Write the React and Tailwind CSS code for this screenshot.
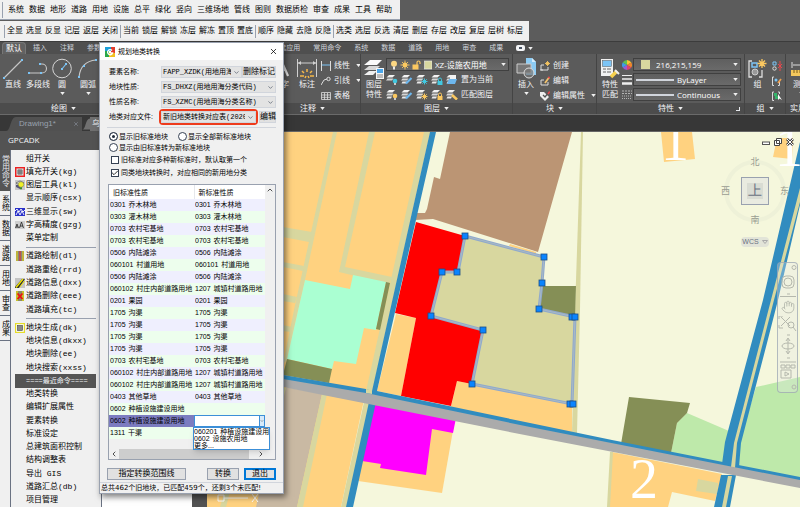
import React, { useState } from 'react';
import { X, ChevronDown, ChevronUp, ChevronLeft, ChevronRight, Check, Hand } from 'lucide-react';

const menus = ['系统', '数据', '地形', '道路', '用地', '设施', '总平', '绿化', '竖向', '三维场地', '管线', '图则', '数据质检', '审查', '成果', '工具', '帮助'];

const layerTools = [
  ['全显', '选显', '反显', '记层', '返层', '关闭'],
  ['当前', '锁层', '解锁', '冻层', '解冻', '置顶', '置底'],
  ['顺序', '隐藏', '去隐', '反隐'],
  ['选类', '选层', '反选', '清层', '删层', '存层', '改层', '复层', '层树', '标层'],
];

const ribbonTabs = ['插入', '注释', '参数化', '视图', '管理', '输出', '附加模块', 'A360', '精选应用', '常用命令', '系统', '数据', '道路', '用地', '审查', '成果'];

const sideTabs = ['系统', '数据', '道路', '用地', '审查', '成果'];

const commands = [
  { name: '组开关' },
  { name: '填充开关(kg)', icon: 'fill' },
  { name: '图层工具(kl)', icon: 'layer' },
  { name: '显示顺序(csx)' },
  { name: '三维显示(sw)', icon: 'mesh' },
  { name: '字高精度(gzg)', icon: 'text' },
  { name: '菜单定制' },
  { divider: true },
  { name: '道路绘制(dl)', icon: 'road' },
  { name: '道路重绘(rrd)' },
  { name: '道路信息(dxx)', icon: 'info' },
  { name: '道路删除(eee)', icon: 'delete' },
  { name: '道路填充(tc)' },
  { divider: true },
  { name: '地块生成(dk)', icon: 'block' },
  { name: '地块信息(dkxx)' },
  { name: '地块删除(ee)' },
  { name: '地块搜索(xxss)' },
  { name: '====最近命令====', heading: true },
  { name: '地类转换' },
  { name: '编辑扩展属性' },
  { name: '要素转换' },
  { name: '标准设定' },
  { name: '总建筑面积控制' },
  { name: '结构调整表' },
  { name: '导出 GIS' },
  { name: '道路汇总(db)' },
  { name: '项目管理' },
];

const rows = [
  ['0301', '乔木林地', '0301', '乔木林地'],
  ['0303', '灌木林地', '0303', '灌木林地'],
  ['0703', '农村宅基地', '0703', '农村宅基地'],
  ['0703', '农村宅基地', '0703', '农村宅基地'],
  ['0506', '内陆滩涂', '0506', '内陆滩涂'],
  ['060101', '村道用地', '060101', '村道用地'],
  ['0506', '内陆滩涂', '0506', '内陆滩涂'],
  ['060102', '村庄内部道路用地', '1207', '城镇村道路用地'],
  ['0201', '果园', '0201', '果园'],
  ['1705', '沟渠', '1705', '沟渠'],
  ['1705', '沟渠', '1705', '沟渠'],
  ['1705', '沟渠', '1705', '沟渠'],
  ['1705', '沟渠', '1705', '沟渠'],
  ['0703', '农村宅基地', '0703', '农村宅基地'],
  ['060102', '村庄内部道路用地', '1207', '城镇村道路用地'],
  ['060102', '村庄内部道路用地', '1207', '城镇村道路用地'],
  ['0403', '其他草地', '0403', '其他草地'],
  ['0602', '种植设施建设用地', '', ''],
  ['0602', '种植设施建设用地', '', ''],
  ['1311', '干渠', '', ''],
];

const SELECTED = 18;

const grips = [
  [465, 236], [544, 257], [542, 283], [539, 309], [572, 317], [575, 317], [570, 404], [573, 404],
  [472, 384], [483, 330], [431, 316], [442, 272], [457, 272],
];

const CommandIcon = ({ type }) => (
  <svg viewBox="0 0 10 10" className="h-[10px] w-[10px] shrink-0" aria-hidden="true">
    {type === 'fill' && (
      <>
        <rect width="10" height="10" fill="#d3d3d3" />
        <rect x=".7" y=".7" width="8.6" height="8.6" fill="none" stroke="#ee2020" strokeWidth="1.4" />
        <path d="M3 3h4v4H3zM3 5h4M5 3v4" fill="none" stroke="#444" strokeWidth=".7" />
      </>
    )}
    {type === 'layer' && (
      <>
        <rect width="10" height="10" fill="#c8c8c8" />
        <path d="M1 3l4-2 4 2-4 2z" fill="#fff" stroke="#333" strokeWidth=".6" />
        <path d="M1 5v2l4 2V5z" fill="#557" />
        <circle cx="6" cy="4.500" r="2.800" fill="#eef02a" stroke="#555" strokeWidth=".4" />
        <path d="M5 7.300h2v2H5z" fill="#3a8c2c" />
      </>
    )}
    {type === 'mesh' && (
      <>
        <rect y="1" width="10" height="8" fill="#2a30c8" />
        <path d="M0 4l2-2 2 3 2-3 2 3 2-2M1 8l2-4 2 4 2-4 2 4" fill="none" stroke="#fff" strokeWidth=".9" />
      </>
    )}
    {type === 'text' && (
      <>
        <rect y="1" width="10" height="8" fill="#cfcfcf" />
        <path d="M.5 8l1.5-4 1.5 4M1 7h2M4.500 8l2-6 2 6M5 6h3" fill="none" stroke="#222" strokeWidth=".8" />
      </>
    )}
    {type === 'road' && (
      <>
        <rect x="1" width="8" height="10" fill="#8a8478" />
        <path d="M2 0v10M8 0v10" stroke="#f2e600" strokeWidth="1" />
        <path d="M5 0v10" stroke="#d33" strokeWidth="1.2" />
      </>
    )}
    {type === 'info' && (
      <>
        <rect width="10" height="10" fill="#c4c4c4" />
        <path d="M0 9l7-8h3L4 10H0z" fill="#333" />
        <path d="M1 9.500L8 1" stroke="#f2e600" strokeWidth="1.300" />
        <path d="M4.500 9.500L9.500 3" stroke="#f2e600" />
      </>
    )}
    {type === 'delete' && (
      <>
        <rect x="1" width="8" height="10" fill="#8c8c66" />
        <path d="M2 0v10M8 0v10" stroke="#f2e600" strokeWidth="1.2" />
        <path d="M2.500 2.500l5 5.500M7.500 2.500l-5 5.500" stroke="#f01010" strokeWidth="1.800" />
      </>
    )}
    {type === 'block' && (
      <>
        <rect x=".6" y=".6" width="8.800" height="8.800" fill="#fff" stroke="#e6dc28" strokeWidth="1.2" />
        <rect x="2.500" y="2.500" width="5" height="5" fill="#8a8a8a" stroke="#444" strokeWidth=".6" />
      </>
    )}
  </svg>
);

const Caret = ({ className = '' }) => (
  <svg viewBox="0 0 6 4" className={`h-[3px] w-[5px] shrink-0 ${className}`} aria-hidden="true">
    <path d="M0 0h6L3 4z" fill="#f0f0f0" />
  </svg>
);

const Panel = ({ title, className, launcher, children }) => (
  <section className={`flex shrink-0 flex-col border-r border-[#444] ${className}`}>
    <div className="flex flex-1 overflow-hidden px-[3px] pt-[4px]">{children}</div>
    <div className="relative flex h-[11px] items-center justify-center gap-1 bg-[#4c4c4c] whitespace-nowrap">
      {title}
      {title && <Caret />}
      {launcher && <span className="absolute right-1 h-[4px] w-[4px] border-r border-b border-gray-200" />}
    </div>
  </section>
);

const BigTool = ({ label, caret, className = '', children }) => (
  <button type="button" className={`flex shrink-0 flex-col items-center ${className}`}>
    <svg viewBox="0 0 20 21" className="h-[21px] w-[20px] overflow-visible" aria-hidden="true">{children}</svg>
    {label.map((l) => (
      <span key={l} className="pt-[2px] text-[8px] leading-[8px] whitespace-nowrap">{l}</span>
    ))}
    {caret && <Caret className="mt-[3px]" />}
  </button>
);

const SmallTool = ({ label, caret, children }) => (
  <button type="button" className="flex h-[15px] items-center gap-[3px] whitespace-nowrap">
    <svg viewBox="0 0 10 10" className="h-[10px] w-[10px] shrink-0" aria-hidden="true">{children}</svg>
    {label}
    {caret && <Caret className="ml-[3px]" />}
  </button>
);

const LayerTool = ({ color, shape, name }) => (
  <button type="button" aria-label={name} className="h-[11px] w-[12px] shrink-0">
    <svg viewBox="0 0 12 11" className="h-[11px] w-[12px]" aria-hidden="true">
      <path d="M3 1h6L6.500 3.500H.5z" fill="#f2f2f2" />
      <path d="M1.500 4.500H7.500L6 6.500H0z" fill="#d5d5d5" />
      {shape !== 'thin' && <path d="M1.500 7.500H6L5 9.500H.5z" fill="#e8e8e8" />}
      {shape === 'brush' && <path d="M5 9.500L10.500 4" stroke={color} strokeWidth="2.200" />}
      {shape === 'star' && <path d="M8.500 4.500v6M5.500 7.500h6M6.300 5.300l4.400 4.400M10.700 5.300l-4.400 4.400" stroke={color} />}
      {shape === 'lock' && (
        <>
          <rect x="6.500" y="7" width="5" height="4" fill={color} />
          <path d="M7.500 7V5.500a1.500 1.500 0 013 0V7" fill="none" stroke={color} />
        </>
      )}
      {(shape === 'bulb' || shape === 'thin') && (
        <>
          <circle cx="9" cy="7" r="2.300" fill={color} />
          <path d="M9 9v2" stroke="#eee" strokeWidth="1.500" />
        </>
      )}
      {shape === 'match' && <path d="M6 6l5 4.500" stroke={color} strokeWidth="2.600" />}
      {shape === 'current' && (
        <>
          <path d="M3 5h8l-2 5H1z" fill={color} />
          <path d="M4 1h6v4H4z" fill="#f2f2f2" />
        </>
      )}
    </svg>
  </button>
);

const RibbonSelect = ({ label, value, children }) => (
  <div className="relative flex h-[13px] items-center gap-[3px] border border-[#404040] bg-gradient-to-b from-[#5f5f5f] to-[#6a6a6a] pl-[2px]">
    {children}
    <select aria-label={label} className="h-full min-w-0 flex-1 appearance-none bg-transparent text-[8px] leading-[11px] text-white outline-none [font-family:'Open_Sans','Noto_Sans_CJK_SC',sans-serif]">
      <option>{value}</option>
    </select>
    <Caret className="absolute right-[2px]" />
  </div>
);

const Ribbon = () => (
  <div className="flex h-[60px] shrink-0 overflow-hidden bg-[#5b5b5b] text-[8px] leading-[10px] text-gray-100">
    <Panel title="绘图" className="w-[128px]">
      <BigTool label={['直线']} className="w-[20px]">
        <path d="M1 20L19 2" stroke="#c9c9c9" strokeWidth="1.100" />
        <path d="M0 19h2v2H0zM18 1h2v2h-2z" fill="#7cc4f5" />
      </BigTool>
      <BigTool label={['多段线']} className="ml-[2px] w-[26px]">
        <path d="M1 15h13a4.500 4.500 0 000-9h-2" fill="none" stroke="#c9c9c9" strokeWidth="1.100" />
        <path d="M0 14h2v2H0zM12 14h2v2h-2zM11 5h2v2h-2z" fill="#7cc4f5" />
      </BigTool>
      <BigTool label={['圆']} caret className="w-[22px]">
        <circle cx="10" cy="10.500" r="9.300" fill="none" stroke="#d5d5d5" />
        <path d="M10 11l4-5" stroke="#7cc4f5" strokeWidth="1.200" />
        <path d="M9 10h2v2H9zM13 5h2v2h-2z" fill="#7cc4f5" />
      </BigTool>
      <BigTool label={['圆弧']} caret className="ml-[4px] w-[22px]">
        <path d="M1 19C2 9 8 3 18 2" fill="none" stroke="#c9c9c9" strokeWidth="1.100" />
        <path d="M0 18h2v2H0zM5 7h2v2H5zM17 1h2v2h-2z" fill="#7cc4f5" />
      </BigTool>
    </Panel>
    <Panel title="修改" className="w-[137px]" />
    <Panel title="注释" className="w-[96px]">
      <BigTool label={['文字']} className="w-[26px]">
        <path d="M3 18L10 2l7 16M6 12h8" fill="none" stroke="#f0f0f0" strokeWidth="2.200" />
      </BigTool>
      <BigTool label={['标注']} className="ml-[3px] w-[20px]">
        <path d="M.5 1v18M19.500 1v18M1 5h18" stroke="#d0d0d0" />
        <path d="M1 5l3-2v4zM19 5l-3-2v4z" fill="#d0d0d0" />
        <path d="M10 11v3M5 13l2 2M15 13l-2 2M3 18h4M13 18h4M8 20l1-2M12 20l-1-2" stroke="#f5b84a" strokeWidth="1.500" />
      </BigTool>
      <div className="ml-[4px] flex flex-col">
        <SmallTool label="线性" caret>
          <path d="M.5 0v10M9.500 0v10" stroke="#ddd" />
          <path d="M1 4h8" stroke="#7cc4f5" />
        </SmallTool>
        <SmallTool label="引线" caret>
          <path d="M0 9l3-5 3-1" fill="none" stroke="#ddd" />
          <circle cx="7.500" cy="3" r="1.700" fill="none" stroke="#ddd" />
        </SmallTool>
        <SmallTool label="表格">
          <path d="M.5 1.500h9v7h-9zM.5 4h9M.5 6.300h9M3.500 2v6.500M6.500 2v6.500" fill="none" stroke="#ddd" strokeWidth=".8" />
        </SmallTool>
      </div>
    </Panel>
    <Panel title="图层" className="w-[152px]">
      <BigTool label={['图层', '特性']} className="w-[20px]">
        <path d="M6 2h12l-5 5H0z" fill="#fafafa" />
        <path d="M5 8h11l-4 4H0z" fill="#d8d8d8" />
        <path d="M5 13h8l-4 4H0z" fill="#efefef" />
        <rect x="12" y="10" width="8" height="11" fill="#f5f5f5" />
        <rect x="13" y="11" width="6" height="4" fill="#4aa6ea" />
        <path d="M13 17h6M13 19h6" stroke="#666" strokeWidth=".8" />
      </BigTool>
      <div className="ml-[2px] flex min-w-0 flex-1 flex-col gap-[2px]">
        <RibbonSelect label="图层" value="XZ-设施农用地">
          <svg viewBox="0 0 42 10" className="ml-[1px] h-[10px] w-[42px] shrink-0" aria-hidden="true">
            <circle cx="4" cy="3.700" r="3" fill="#fbd682" />
            <path d="M3 6.500h2V9.500H3z" fill="#e8e8e8" />
            <circle cx="15" cy="5" r="2.400" fill="#fbc860" />
            <path d="M15 .5v9M10.500 5h9M12 2l6 6M18 2l-6 6" stroke="#fbc860" strokeWidth=".9" />
            <path d="M27 5V2.500a1.500 1.500 0 013 0V4" fill="none" stroke="#fbc860" strokeWidth="1.200" />
            <rect x="22.500" y="4.500" width="6" height="5" fill="#fbc860" />
            <rect x="34.500" y="1" width="7.500" height="8" fill="#d8d79f" stroke="#eee" strokeWidth=".6" />
          </svg>
        </RibbonSelect>
        <div className="flex items-center gap-[3px] pt-[1px] whitespace-nowrap">
          <LayerTool name="关闭" shape="thin" color="#42c8e0" />
          <LayerTool name="隔离" shape="brush" color="#6db7ee" />
          <LayerTool name="冻结" shape="star" color="#42c8e0" />
          <LayerTool name="锁定" shape="lock" color="#42c8e0" />
          <LayerTool name="设为当前图层" shape="current" color="#6db7ee" />
          <button type="button">置为当前</button>
        </div>
        <div className="flex items-center gap-[3px] pt-[2px] whitespace-nowrap">
          <LayerTool name="打开" shape="bulb" color="#fbc860" />
          <LayerTool name="取消隔离" shape="brush" color="#6db7ee" />
          <LayerTool name="解冻" shape="star" color="#fbc860" />
          <LayerTool name="解锁" shape="lock" color="#fbc860" />
          <LayerTool name="匹配" shape="match" color="#fbc860" />
          <button type="button">匹配图层</button>
        </div>
      </div>
    </Panel>
    <Panel title="块" className="w-[84px]">
      <BigTool label={['插入']} caret className="w-[20px]">
        <path d="M10 0h6l4 4v13H10z" fill="#8ccbf3" />
        <path d="M16 0v4h4" fill="#d4edfc" />
        <path d="M1 6h14v9H1z" fill="#777" stroke="#ccc" />
        <circle cx="13" cy="15" r="5" fill="#777" fillOpacity=".7" stroke="#ddd" />
      </BigTool>
      <div className="ml-[4px] flex flex-col">
        <SmallTool label="创建">
          <path d="M1 4v5h7V6M1 4h3M0 9h3" fill="none" stroke="#ddd" />
          <path d="M7.500 0v5M5 2.500h5M6 1l3 3M9 1L6 4" stroke="#fbc860" strokeWidth=".9" />
        </SmallTool>
        <SmallTool label="编辑">
          <path d="M1 4v5h7V6M1 4h3" fill="none" stroke="#ddd" />
          <path d="M5 7L9 1.500" stroke="#f3c36d" strokeWidth="1.800" />
          <path d="M8.500 2.200L9.500 .8" stroke="#e5484d" strokeWidth="1.800" />
        </SmallTool>
        <SmallTool label="编辑属性" caret>
          <path d="M0 1h4l5 5-4 4-5-5z" fill="#eee" />
          <path d="M3 4l2 2 4-5" fill="none" stroke="#555" strokeWidth="1.300" />
          <path d="M8 3L9.800 .5" stroke="#e5484d" strokeWidth="1.500" />
        </SmallTool>
      </div>
    </Panel>
    <Panel title="特性" launcher className="w-[148px]">
      <BigTool label={['特性', '匹配']} className="w-[20px]">
        <rect x="1" y="1" width="12" height="17" fill="#f1f1f1" />
        <rect x="2.500" y="2.500" width="9" height="6" fill="#7cc4f5" stroke="#555" strokeWidth=".5" />
        <path d="M3 11h3M7 11h4M3 14h3M7 14h4" stroke="#666" />
        <path d="M11 19l6-6" stroke="#f5d04e" strokeWidth="3.500" />
        <path d="M15 12l4 4" stroke="#eee" strokeWidth="2" />
      </BigTool>
      <div className="ml-[2px] flex flex-col gap-[5px] pt-[2px]">
        <svg viewBox="0 0 10 10" className="h-[10px] w-[10px]" aria-hidden="true">
          <path d="M5 5V0a5 5 0 014.300 2.500z" fill="#f5c431" />
          <path d="M5 5l4.300-2.500a5 5 0 010 5z" fill="#f0862c" />
          <path d="M5 5l4.300 2.500A5 5 0 015 10z" fill="#e0406e" />
          <path d="M5 5v5A5 5 0 01.7 7.500z" fill="#9b5bd0" />
          <path d="M5 5L.7 7.500a5 5 0 010-5z" fill="#3d9be8" />
          <path d="M5 5L.7 2.500A5 5 0 015 0z" fill="#5fc252" />
        </svg>
        <svg viewBox="0 0 10 10" className="h-[10px] w-[10px]" aria-hidden="true">
          <path d="M0 .5h10" stroke="#eee" />
          <path d="M0 4h10" stroke="#eee" strokeWidth="1.500" />
          <path d="M0 8.500h10" stroke="#eee" strokeWidth="2.500" />
        </svg>
        <svg viewBox="0 0 10 10" className="h-[10px] w-[10px]" aria-hidden="true">
          <path d="M0 1h10M0 3.500h10" stroke="#ccc" strokeWidth=".8" strokeDasharray="2 1" />
          <path d="M0 6h10M0 8.500h10" stroke="#ccc" strokeWidth=".8" strokeDasharray="1 1" />
        </svg>
      </div>
      <div className="ml-[1px] flex min-w-0 flex-1 flex-col gap-[2px]">
        <RibbonSelect label="颜色" value="216,215,159">
          <span className="mr-[3px] ml-[5px] h-[9px] w-[9px] shrink-0 bg-[#d8d79f]" />
        </RibbonSelect>
        <RibbonSelect label="线宽" value="ByLayer">
          <span className="h-[2px] w-[38px] shrink-0 bg-gray-300" />
        </RibbonSelect>
        <RibbonSelect label="线型" value="Continuous">
          <span className="h-[2px] w-[38px] shrink-0 bg-gray-300" />
        </RibbonSelect>
      </div>
    </Panel>
    <Panel title="组" className="w-[41px]">
      <BigTool label={['组']} className="w-[19px]">
        <path d="M4 3H1v16h3M11 19h3v-7" fill="none" stroke="#ddd" strokeWidth="1.300" />
        <path d="M4 5h5v4H4z" fill="none" stroke="#7cc4f5" strokeWidth="1.500" />
        <circle cx="7" cy="14" r="3" fill="#999" stroke="#ccc" />
        <path d="M14 1v9M9.500 5.500h9M11 2.500l6 6M17 2.500l-6 6" stroke="#fbc860" strokeWidth="1.300" />
      </BigTool>
      <div className="ml-[5px] flex flex-col">
        <SmallTool label="">
          <path d="M1 1h3v3H1z" fill="none" stroke="#7cc4f5" />
          <circle cx="2.500" cy="7.500" r="1.700" fill="none" stroke="#ddd" />
          <path d="M8 0v10M6 3l4 4M10 3L6 7" stroke="#e5484d" />
        </SmallTool>
        <SmallTool label="">
          <path d="M2 1H.5v8.500H2M6 9.500h1.500V6" fill="none" stroke="#ddd" />
          <circle cx="4" cy="4" r="1.500" fill="#7cc4f5" />
          <path d="M6 7l3-4" stroke="#f0a050" strokeWidth="1.700" />
        </SmallTool>
        <SmallTool label="">
          <path d="M2 1H.5v8.500H2M6 1h1.500v2" fill="none" stroke="#ddd" />
          <path d="M2 2h3v3H2zM3 5h3v3H3z" fill="#35b46a" />
          <path d="M6 3v6l1.500-1.500L10 9z" fill="#fff" />
        </SmallTool>
      </div>
    </Panel>
    <Panel title="实用工具" className="w-[50px]">
      <BigTool label={['测量']} caret className="ml-[2px] w-[20px]">
        <path d="M1 4v6M19 4v6M2 7h16" stroke="#ddd" />
        <path d="M0 12h20v6H0z" fill="#f3c75c" />
        <path d="M3 12v3M6 12v3M9 12v3M12 12v3" stroke="#7a5c18" />
      </BigTool>
    </Panel>
  </div>
);

const Palette = () => (
  <aside className="flex w-[207px] shrink-0 flex-col bg-[#535353]">
    <h2 className="h-[19px] shrink-0 pl-[8px] text-[8px] leading-[18px] text-gray-100 [font-family:'Open_Sans',sans-serif]">GPCADK</h2>
    <div className="flex min-h-0 flex-1">
      <div className="flex w-[10px] shrink-0 flex-col bg-[#f0f0f0] text-[8px] leading-[9px] text-black">
        <button type="button" className="h-[41px] bg-[#555] text-center text-gray-200 [writing-mode:vertical-rl]">常用命令</button>
        {sideTabs.map((t) => (
          <button key={t} type="button" className="h-[25px] border-b border-gray-500 text-center [writing-mode:vertical-rl]">{t}</button>
        ))}
      </div>
      <div className="flex w-[92px] shrink-0 flex-col overflow-hidden border-x border-gray-500 bg-[#f0f0f0] pt-[2px] [font-family:'Liberation_Mono','Noto_Sans_CJK_SC',monospace] text-[8px] text-black">
        {commands.map((c, i) => {
          if (c.divider) return <hr key={i} className="my-[2px] mr-[5px] ml-[15px] border-gray-400" />;
          return (
            <button
              key={i}
              type="button"
              className={`mr-[5px] ml-[4px] flex min-h-0 flex-1 items-center gap-px text-left leading-[10px] whitespace-nowrap ${c.heading ? 'bg-[#555] text-[7px] text-gray-100' : ''}`}
            >
              {c.icon ? <CommandIcon type={c.icon} /> : <span className="w-[10px] shrink-0" />}
              {c.name}
            </button>
          );
        })}
      </div>
      <div className="w-[90px] shrink-0 bg-white" />
    </div>
  </aside>
);

const Drawing = () => (
  <svg viewBox="207 132 593 375" preserveAspectRatio="xMinYMin slice" className="block h-full w-full" role="img" aria-label="地块图">
    <rect x="207" y="132" width="593" height="375" fill="#f5f7dc" />
    {/* west fields */}
    <path d="M207 132H430L372 392 207 366z" fill="#ffd280" />
    <g fill="#d8d79f">
      <path d="M333 132h4L305 280 287 360 283 364 294 310z" />
      <path d="M369 132h6L345 267 392 277 389 284 339 272z" />
      <path d="M207 213L283 227 312 232 309 242 283 237 207 223z" />
      <path d="M283 262l21 4-1 5-20-4zM283 294l14 3-2 6-12-2zM283 325l9 2-1 5-8-1z" />
      <path d="M424 132h6L372 392 366 391z" />
    </g>
    <path d="M305 280L350 289 353 275 386 282 376 330 364 328 356 364 334 361 332 369 287 359z" fill="#aaffd2" />
    <path d="M386 282l4 1L380 330l-4-1zM287 359L332 369 329 383 283 375z" fill="#858f56" />
    {/* south-west */}
    <path d="M207 373L364 400 341 507H207z" fill="#ffd280" />
    <path d="M290 388L322 394 297 507H256L283 388z" fill="#c9b9a3" />
    <path d="M322 394h5L303 507h-6zM364 402h6L347 507h-6zM228 480h5L226 507h-6zM283 388h3L283 400z" fill="#d8d79f" />
    {/* brown block */}
    <path d="M450 132H572L538 252 433 219 415 220 417 213H425L427 209 434 177 440 179z" fill="#bb9574" />
    <path d="M510 244l26 8v2l-27-8z" fill="#ffd280" />
    <path d="M581 132h2L580 310 577 433H572L575 310z" fill="#d8d79f" />
    <path d="M542 286H576L575 317 539 309z" fill="#858f56" />
    {/* red and magenta blocks */}
    <path d="M396 314L416 318 401 396 377 391zM457 381L472 384 572 405V433L451 407z" fill="#ffd280" />
    <path d="M416 222L465 236 458 272H442L431 316 483 330 472 384 457 381 451 406 401 396 416 318 395 313z" fill="#f00" />
    <path d="M375 404L455 419 442 493 358 481z" fill="#ffd280" />
    <path d="M375 403L456 418 453 433 432 429 426 475 380 468 381 464 362 461z" fill="#f0f" />
    {/* east */}
    <path d="M661 132H692L695 159 664 162zM777 138H793L792 159 773 157zM612 452L722 474 715 501 672 492 668 507H609z" fill="#ffd280" />
    <path d="M610 452h3L610 507h-3zM698 479L718 483 717 494 696 491z" fill="#d8d79f" />
    <path d="M800 377L756 387 739 443V466L800 478zM687 413L729 431 723 464 671 453 677 423z" fill="#bee9aa" />
    <path d="M629 397L690 403 687 413 677 423 671 453 621 444z" fill="#858f56" />
    {/* water and roads */}
    <g fill="#318cbf">
      <path d="M430 132H436L377 391 530 423 612 440 723 462 800 477V481L530 428 366 394 207 368V362L366 389 372 391z" />
      <path d="M369 402H376L353 507H346z" />
      <path d="M800 142V205L778 300 767 343 741 443 739 467 722 464 725 442 763 300z" />
      <path d="M721 475H736L730 507H714z" />
    </g>
    <path d="M800 188V202L774 300 737 443 735 468 731 467 734 443 771 300zM728 476H732L726 507H722z" fill="#d8d79f" />
    <path d="M207 366L283 379 366 393 530 427 800 480V488L530 436 323 395 283 387 207 375z" fill="#ababab" />
    <path d="M366 389l6 1v4l-6-1z" fill="#d8d79f" />
    {/* selected parcel */}
    <path d="M465 236L544 257 542 283 539 309 575 317 572 404 472 384 483 330 431 316 442 272H458z" fill="#d8d79f" stroke="#8fa9cc" strokeWidth="3" />
    <path d="M465 236L544 257 542 283 539 309 575 317 572 404 472 384 483 330 431 316 442 272H458z" fill="none" stroke="#a9b9c4" strokeWidth="1" />
    {grips.map(([x, y]) => (
      <rect key={`${x}-${y}`} x={x - 3} y={y - 3} width="6" height="6" fill="#0a84ff" stroke="#1d4f86" strokeWidth=".8" />
    ))}
    <g fill="#fff" fontFamily="'Liberation Serif', serif" fontSize="56">
      <text x="661" y="160">1</text>
      <text x="775" y="166">1</text>
      <text x="630" y="498">2</text>
    </g>
    <path d="M218 495h6v6h-6zM224 498h24M252 494l6 8M258 494l-6 8" fill="none" stroke="#fff" />
  </svg>
);

const Viewport = () => (
  <main className="relative min-w-0 flex-1 overflow-hidden border-t border-[#666]">
    <Drawing />
    <div className="absolute top-[6px] right-[6px]">
      <svg viewBox="0 0 32 8" className="h-[8px] w-[32px]" aria-hidden="true">
        <rect x=".5" y="4" width="7" height="2.500" fill="#fff" stroke="#555" />
        <path d="M14.500 .5h5v5h-5zM12.500 2.500h5v5h-5z" fill="#fff" stroke="#444" />
        <path d="M25 1l6 6M31 1l-6 6" stroke="#444" strokeWidth="2.600" />
        <path d="M25 1l6 6M31 1l-6 6" stroke="#fff" strokeWidth="1" />
      </svg>
    </div>
    <div className="absolute top-[25px] right-[11px] grid w-[68px] grid-cols-[20px_28px_20px] items-center justify-items-center text-[9px] leading-[10px] text-[#9a9d92]">
      <span className="absolute inset-x-[3px] top-[3px] h-[62px] rounded-full border-4 border-[#eef1d8]" />
      <span className="relative col-span-3">北</span>
      <span className="relative justify-self-start">西</span>
      <span className="relative my-[10px] flex h-[28px] w-[28px] items-center justify-center border border-gray-400 bg-[#e9ebe0] font-serif text-[14px] text-gray-500">
        <span className="bg-[#d9dcd3] px-px leading-[16px]">上</span>
      </span>
      <span className="relative justify-self-end">东</span>
      <span className="relative col-span-3">南</span>
    </div>
    <button type="button" className="absolute top-[105px] right-[31px] flex h-[10px] w-[28px] items-center justify-center gap-[3px] rounded-sm bg-[#e2e4d8] text-[7px] text-gray-500">
      WCS
      <svg viewBox="0 0 6 4" className="h-[4px] w-[6px]" aria-hidden="true"><path d="M.5.500h5L3 3.500z" fill="none" stroke="#aaa" /></svg>
    </button>
    <div className="absolute top-[130px] right-[2px] flex h-[131px] w-[21px] flex-col items-center justify-between rounded-sm border border-gray-400/70 bg-gray-200/30 py-[2px] text-[#b5b8ad]">
      <svg viewBox="0 0 20 32" className="h-[32px] w-[20px]" aria-hidden="true" fill="none" stroke="currentColor">
        <circle cx="16" cy="2.500" r="2" />
        <rect x="4" y="11" width="12" height="12" rx="4" />
        <circle cx="10" cy="17" r="4" />
        <path d="M9 29h3M2 31.500h16" />
      </svg>
      <Hand size={14} strokeWidth={1.5} />
      <svg viewBox="0 0 20 74" className="h-[74px] w-[20px]" aria-hidden="true" fill="none" stroke="currentColor">
        <path d="M3 1l9 9M12 1L3 10M1 3V0h4M1 9v3h4" />
        <circle cx="13" cy="9" r="3" />
        <path d="M15 11l3 4M9 19h3" />
        <path d="M10 23v14M8 25l2-3 2 3M8 35l2 3 2-3" />
        <ellipse cx="10" cy="30" rx="6" ry="3" />
        <path d="M9 42h3M2 46h16M3 49h4v3H3zM8 49h4v3H8zM13 49h4v3h-4zM3 54h10v8H3zM7 56l4 2-4 2z" />
        <circle cx="16" cy="71" r="2" />
      </svg>
    </div>
  </main>
);

const Combo = ({ id, value, className = '' }) => (
  <div className={`relative min-w-0 ${className}`}>
    <select
      id={id}
      className="block h-[12px] w-full appearance-none overflow-hidden border border-gray-300 bg-[#e3e3e3] pr-[10px] pl-[1px] [font-family:'Liberation_Mono','Noto_Sans_CJK_SC',monospace] text-[7px] leading-[10px] text-black outline-none"
    >
      <option>{value}</option>
    </select>
    <ChevronDown className="pointer-events-none absolute top-[3px] right-[2px] h-[7px] w-[7px] text-gray-700" />
  </div>
);

const DialogButton = ({ className = '', children, ...rest }) => (
  <button type="button" className={`h-[12px] shrink-0 border bg-[#e1e1e1] text-center text-[8px] leading-[10px] whitespace-nowrap ${className}`} {...rest}>
    {children}
  </button>
);

const CheckRow = ({ label, defaultChecked }) => (
  <label className="relative flex h-[13px] items-center gap-[2px] pl-[2px]">
    <input type="checkbox" defaultChecked={defaultChecked} className="peer h-[8px] w-[8px] appearance-none border border-gray-700 bg-white" />
    <Check className="pointer-events-none absolute left-[2px] hidden h-[8px] w-[8px] peer-checked:block" strokeWidth={2.5} />
    {label}
  </label>
);

const ConvertDialog = () => {
  const [mode, setMode] = useState('old');

  const radio = (value, label) => (
    <label className="flex h-[11px] items-center gap-px whitespace-nowrap">
      <input
        type="radio"
        name="mode"
        checked={mode === value}
        onChange={() => setMode(value)}
        className="h-[9px] w-[9px] appearance-none rounded-full border border-gray-700 bg-white checked:bg-gray-800 checked:shadow-[inset_0_0_0_2px_#fff]"
      />
      {label}
    </label>
  );

  return (
    <div
      role="dialog"
      aria-label="规划地类转换"
      className="absolute top-[42px] left-[99px] flex w-[185px] flex-col border border-gray-400 bg-[#f0f0f0] text-[7px] leading-[10px] text-black shadow-[2px_3px_6px_rgba(0,0,0,0.5)]"
    >
      <header className="flex h-[17px] items-center gap-[3px] bg-white px-[5px]">
        <svg viewBox="0 0 10 10" className="h-[10px] w-[10px]" aria-hidden="true">
          <path d="M0 0h6v4H0z" fill="#1c9fd8" />
          <path d="M6 0h4v6H6z" fill="#e23c2c" />
          <path d="M0 4h4v6H0z" fill="#2aa84a" />
          <path d="M4 6h6v4H4z" fill="#f2c01f" />
          <path d="M7 3.500A2.500 2.500 0 107.500 6H5.500" fill="none" stroke="#fff" strokeWidth="1.400" />
        </svg>
        <h1 className="flex-1">规划地类转换</h1>
        <button type="button" aria-label="关闭"><X className="h-[9px] w-[9px]" /></button>
      </header>

      <div className="flex flex-col px-[7px] pt-[6px]">
        <div className="flex flex-col gap-[3px] pl-[2px]">
          <div className="flex items-center">
            <label htmlFor="layer" className="w-[52px] shrink-0">要素名称:</label>
            <Combo id="layer" value="FAPP_XZDK(用地用海分类)" className="flex-1" />
            <DialogButton className="w-[34px] border-gray-300">删除标记</DialogButton>
          </div>
          <div className="flex items-center">
            <label htmlFor="code" className="w-[52px] shrink-0">地块性质:</label>
            <Combo id="code" value="FS_DHXZ(用地用海分类代码)" className="flex-1" />
          </div>
          <div className="flex items-center">
            <label htmlFor="name" className="w-[52px] shrink-0">性质名称:</label>
            <Combo id="name" value="FS_XZMC(用地用海分类名称)" className="flex-1" />
          </div>
          <div className="flex items-center">
            <label htmlFor="file" className="w-[52px] shrink-0 whitespace-nowrap">地类对应文件:</label>
            <Combo id="file" value="新旧地类转换对应表(2020版)" className="flex-1 rounded-xs ring-2 ring-[#ee3b1c]" />
            <DialogButton className="ml-[3px] w-[17px] border-gray-300">编辑</DialogButton>
          </div>
        </div>

        <div className="mt-[4px] border-t border-gray-300 pt-[3px] pl-[2px]">
          <div className="flex gap-[10px]">
            {radio('old', '显示旧标准地块')}
            {radio('all', '显示全部新标准地块')}
          </div>
          {radio('new', '显示由旧标准转为新标准地块')}
          <CheckRow label="旧标准对应多种新标准时，默认取第一个" />
          <CheckRow label="同类地块转换时，对应相同的新用地分类" defaultChecked />
        </div>

        <div className="mt-[5px] ml-[1px] flex flex-col border border-gray-400">
          <div className="flex">
            <table className="min-w-0 flex-1 table-fixed border-collapse bg-white text-left">
              <thead>
                <tr className="h-[14px] leading-[13px]">
                  <th className="w-[85px] border-r border-gray-200 p-0 pl-[4px] font-normal">旧标准性质</th>
                  <th className="w-[71px] p-0 pl-[4px] font-normal">新标准性质</th>
                </tr>
              </thead>
              <tbody>
                {rows.map(([oldCode, oldName, newCode, newName], i) => (
                  <tr key={i} className={`h-[12px] leading-[12px] ${i % 2 ? 'bg-[#edfeed]' : 'bg-[#efeffe]'}`}>
                    <td className={`p-0 pl-px ${i === SELECTED ? 'bg-[#7c7cc0]' : ''}`}>
                      <div className="flex gap-[3px] overflow-hidden whitespace-nowrap"><span>{oldCode}</span><span>{oldName}</span></div>
                    </td>
                    <td className={`relative p-0 ${i === SELECTED ? '' : 'pl-px'}`}>
                      {i === SELECTED ? (
                        <>
                          <button type="button" aria-label="新标准性质" className="flex h-[12px] w-full justify-end border border-[#3c8fd8] bg-white">
                            <ChevronDown className="h-[10px] w-[5px] border-l border-[#3c8fd8] bg-[#d6eafa]" />
                          </button>
                          <ul role="listbox" className="absolute top-[12px] left-[-1px] z-10 w-[77px] overflow-hidden border border-[#3c8fd8] bg-white leading-[7px] whitespace-nowrap shadow-md">
                            <li role="option" aria-selected="false" className="flex gap-[3px]"><span>060201</span><span>种植设施建设用地</span></li>
                            <li role="option" aria-selected="false" className="flex gap-[3px]"><span>0602</span><span>设施农用地</span></li>
                            <li role="option" aria-selected="false">更多...</li>
                          </ul>
                        </>
                      ) : (
                        <div className="flex gap-[3px] overflow-hidden whitespace-nowrap"><span>{newCode}</span><span>{newName}</span></div>
                      )}
                    </td>
                  </tr>
                ))}
              </tbody>
            </table>
            <div className="flex w-[10px] shrink-0 justify-center pt-[1px]">
              <ChevronUp className="h-[8px] w-[8px]" />
            </div>
          </div>
          <div className="mt-[10px] flex h-[10px] items-center pr-[10px]">
            <ChevronLeft className="h-[8px] w-[10px]" />
            <div className="h-full w-[130px] bg-[#cdcdcd]" />
            <ChevronRight className="ml-auto h-[8px] w-[8px]" />
          </div>
        </div>

        <div className="mt-[8px] flex">
          <DialogButton className="w-[79px] border-gray-400">指定转换范围线</DialogButton>
          <DialogButton className="ml-auto w-[32px] border-gray-400">转换</DialogButton>
          <DialogButton className="ml-[5px] w-[32px] border-[#0078d7] ring-1 ring-[#0078d7] ring-inset">退出</DialogButton>
        </div>
      </div>
      <footer className="mt-[2px] h-[11px] border-t border-gray-300 pl-px [font-family:'DejaVu_Sans','Noto_Sans_CJK_SC',sans-serif] whitespace-nowrap">
        总共462个旧地块，已匹配459个，还剩3个未匹配!
      </footer>
    </div>
  );
};

const App = () => (
  <div className="relative flex h-screen flex-col overflow-hidden bg-[#5c5c5c] [font-family:'Liberation_Sans','Noto_Sans_CJK_SC',sans-serif]">
    <nav className="flex h-[20px] shrink-0 items-center gap-[5px] self-start border-b border-gray-400 bg-[#f0f0f0] pr-[8px] pl-[2px] text-[8px] text-black">
      <span className="h-[16px] w-px bg-gray-400" />
      {menus.map((m) => <button key={m} type="button">{m}</button>)}
    </nav>
    <nav className="mt-px flex h-[20px] shrink-0 items-center gap-px self-start bg-[#f0f0f0] pr-[6px] pl-[3px] text-[8px] text-black">
      {layerTools.map((group) => (
        <React.Fragment key={group[0]}>
          <span className="mx-px h-[13px] w-px bg-gray-400" />
          <div className="flex gap-[3px]">
            {group.map((t) => <button key={t} type="button">{t}</button>)}
          </div>
        </React.Fragment>
      ))}
    </nav>

    <nav className="flex h-[13px] shrink-0 items-center gap-[13px] border-t border-[#3c3c3c] bg-[#4f4f4f] pl-[2px] text-[7px] whitespace-nowrap text-gray-300">
      <button type="button" className="-mr-[6px] h-[12px] w-[24px] rounded-t-sm border border-b-0 border-[#777] bg-[#626262] text-[8px] leading-[10px] text-white">默认</button>
      {ribbonTabs.map((t) => <button key={t} type="button">{t}</button>)}
      <button type="button" aria-label="显示" className="flex items-center gap-[3px]">
        <span className="flex h-[6px] w-[9px] items-center justify-center rounded-xs bg-gray-100"><span className="h-[2px] w-[3px] bg-gray-600" /></span>
        <Caret />
      </button>
    </nav>

    <Ribbon />

    <div className="flex h-[17px] shrink-0 items-end border-t border-[#6a6a6a] bg-[#373737] text-[8px]">
      <div className="flex h-[14px] items-center text-gray-400">
        <svg viewBox="0 0 10 14" className="ml-[6px] h-[14px] w-[10px]" aria-hidden="true"><path d="M0 14C5 14 4 0 10 0v14z" fill="#515151" /></svg>
        <a href="#drawing1" className="flex h-full w-[66px] items-center justify-between bg-[#515151] px-[3px]">
          Drawing1* <X className="h-[6px] w-[6px]" />
        </a>
        <svg viewBox="0 0 10 14" className="h-[14px] w-[8px]" aria-hidden="true"><path d="M0 14C5 14 4 0 10 0v14z" fill="#707070" /></svg>
        <a href="#drawing2" className="flex h-full w-[60px] items-center bg-[#707070] pl-[2px] text-gray-100">乌</a>
      </div>
    </div>

    <div className="flex min-h-0 flex-1">
      <Palette />
      <Viewport />
    </div>

    <ConvertDialog />
  </div>
);

export default App;
